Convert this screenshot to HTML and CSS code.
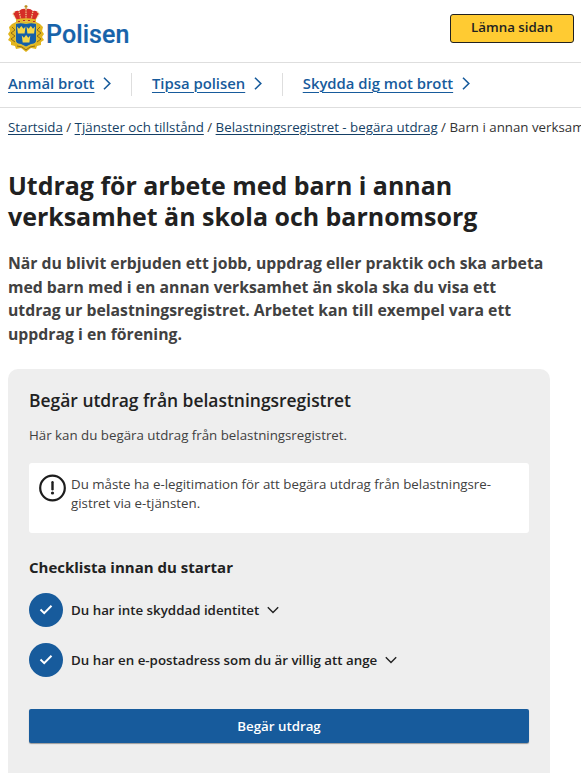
FILE: index.html
```html
<!DOCTYPE html>
<html lang="sv">
<head>
<meta charset="utf-8">
<title>Polisen</title>
<link rel="stylesheet" href="styles.css">
</head>
<body>
<header class="top">
  <a class="brand">
    <svg class="crest" width="36" height="48" viewBox="0 0 36 48">
      <path d="M8 17 L4 19 1 22 2 26 0 29 2 32 0 35 3 37 3 40 7 41 8 44 13 43 18 47 23 43 28 44 29 41 33 40 33 37 36 35 34 32 36 29 34 26 35 22 32 19 28 17Z" fill="#e2b51e"/>
      <path d="M4 22l3 3-4 3 4 3-4 3 4 3M32 22l-3 3 4 3-4 3 4 3-4 3M9 41l5 1 4 3 4-3 5-1" fill="none" stroke="#80651c" stroke-width=".9"/>
      <path d="M7.5 18.5 Q13 17 18 18.5 Q23 17 28.5 18.5 V36 Q28 39 23 39.5 L18 42 13 39.5 Q8 39 7.5 36Z" fill="#155fa8" stroke="#f1cd37" stroke-width=".8"/>
      <path d="M9 16 L5 9 Q7 5 11 6 Q14 3 18 4 Q22 3 25 6 Q29 5 31 9 L27 16Z" fill="#d52d27"/>
      <path d="M9 16 L5 9 7 6M13 15 L11 6M18 15V4M23 15 L25 6M27 16 L31 9 29 6" fill="none" stroke="#f3d994" stroke-width="1.3" stroke-dasharray="1.4 1"/>
      <path d="M8 14.5Q18 12 28 14.5V18Q18 15.5 8 18Z" fill="#e6b72a"/>
      <path d="M10 16.5h2m3-1h2m3 0h2m3 1h2" stroke="#b73028" stroke-width="1.2"/>
      <path d="M18 0v4M16.5 1.5h3" stroke="#bd8d20" stroke-width="1.3"/>
      <path d="M9 21.5l2.1 2.2 2.2-2.7 2.2 2.7 2-2.2-.9 7h-6.7ZM18.5 21.5l2.1 2.2 2.2-2.7 2.2 2.7 2-2.2-.9 7h-6.7ZM13.8 30.5l2.1 2.2 2.2-2.7 2.2 2.7 2-2.2-.9 7h-6.7Z" fill="#f7d848"/>
    </svg>
    <span class="wordmark">Polisen</span>
  </a>
  <button class="leave">Lämna sidan</button>
</header>
<nav class="nav">
  <div class="nav-item"><a>Anmäl brott</a><svg width="8" height="13" viewBox="0 0 8 13"><path d="M1 .8l5.8 5.7L1 12.2"/></svg></div>
  <div class="nav-item"><a>Tipsa polisen</a><svg width="8" height="13" viewBox="0 0 8 13"><path d="M1 .8l5.8 5.7L1 12.2"/></svg></div>
  <div class="nav-item"><a>Skydda dig mot brott</a><svg width="8" height="13" viewBox="0 0 8 13"><path d="M1 .8l5.8 5.7L1 12.2"/></svg></div>
</nav>
<div class="crumbs"><a>Startsida</a> / <a>Tjänster och tillstånd</a> / <a>Belastningsregistret - begära utdrag</a> / Barn i annan verksamhet</div>
<main>
  <h1>Utdrag för arbete med barn i annan<br>verksamhet än skola och barnomsorg</h1>
  <p class="intro">När du blivit erbjuden ett jobb, uppdrag eller praktik och ska arbeta<br>med barn med i en annan verksamhet än skola ska du visa ett<br>utdrag ur belastningsregistret. Arbetet kan till exempel vara ett<br>uppdrag i en förening.</p>
  <section class="card">
    <h2>Begär utdrag från belastningsregistret</h2>
    <p class="lead">Här kan du begära utdrag från belastningsregistret.</p>
    <div class="notice">
      <svg width="28" height="28" viewBox="0 0 28 28"><circle cx="13.5" cy="14" r="12.3" fill="none" stroke="#1d1d1d" stroke-width="2.2"/><path d="M13.5 8.2v7" stroke="#1d1d1d" stroke-width="2.4" stroke-linecap="round"/><circle cx="13.5" cy="19" r="1.6" fill="#1d1d1d"/></svg>
      <p>Du måste ha e-legitimation för att begära utdrag från belastningsre-<br>gistret via e-tjänsten.</p>
    </div>
    <h3>Checklista innan du startar</h3>
    <div class="check">
      <span class="dot"><svg width="14" height="11" viewBox="0 0 14 11"><path d="M1.5 5.5l3.7 3.7L12.5 1.7"/></svg></span>
      <span>Du har inte skyddad identitet</span>
      <svg class="chev" width="12" height="8" viewBox="0 0 12 8"><path d="M.8 1.2L6 6.4l5.2-5.2"/></svg>
    </div>
    <div class="check">
      <span class="dot"><svg width="14" height="11" viewBox="0 0 14 11"><path d="M1.5 5.5l3.7 3.7L12.5 1.7"/></svg></span>
      <span>Du har en e-postadress som du är villig att ange</span>
      <svg class="chev" width="12" height="8" viewBox="0 0 12 8"><path d="M.8 1.2L6 6.4l5.2-5.2"/></svg>
    </div>
    <button class="cta">Begär utdrag</button>
  </section>
</main>
</body>
</html>
```
FILE: styles.css
```css
* { box-sizing: border-box; }
html { overflow: hidden; }
body { margin: 0; height: 773px; overflow: hidden; background: #fff; color: #212121; font-family: "Open Sans", "Liberation Sans", sans-serif; }
h1, h2, h3, p { margin: 0; }
.top { height: 63px; border-bottom: 1px solid #dedede; display: flex; justify-content: space-between; padding: 0 7px 0 8px; }
.brand { display: flex; padding-top: 5px; }
.wordmark { font: 500 25px/30px Roboto, sans-serif; letter-spacing: .1px; color: #1763aa; -webkit-text-stroke: .2px #1763aa; margin: 15px 0 0 2px; }
.leave { width: 124px; height: 29px; margin: 14px 0 0; padding: 0 0 3px; border: 1px solid #212121; border-radius: 3px; background: #ffcb32; color: #212121; font: 600 13.3px/20px "Open Sans", sans-serif; }
.nav { height: 45px; border-bottom: 1px solid #dedede; display: flex; padding: 10px 8px 0; }
.nav-item { display: flex; align-items: center; height: 23px; gap: 9px; color: #175b9c; font-size: 14.85px; font-weight: 600; line-height: 20px; white-space: nowrap; }
.nav-item + .nav-item { border-left: 1px solid #dedede; margin-left: 20px; padding-left: 19.5px; }
.nav-item a { margin-top: -3px; text-decoration: underline; text-decoration-thickness: 1px; text-underline-offset: 3px; }
.nav-item svg { margin-top: -2px; fill: none; stroke: #175b9c; stroke-width: 1.6; }
.crumbs { height: 39px; padding: 9px 0 0 8px; font-size: 13.3px; line-height: 20px; white-space: nowrap; color: #333; }
.crumbs a { color: #153f65; text-decoration: underline; text-underline-offset: 2px; }
main { padding: 23px 31px 0 8px; }
h1 { font-size: 24.95px; line-height: 31px; font-weight: 700; white-space: nowrap; }
.intro { margin-top: 20px; font-size: 15.78px; line-height: 23.7px; font-weight: 700; color: #414141; white-space: nowrap; }
.card { height: 430px; margin-top: 22px; padding: 20px 21px; border-radius: 10px; background: #eee; }
h2 { font-size: 17.45px; line-height: 22px; font-weight: 600; }
.lead { margin-top: 14px; font-size: 13.3px; line-height: 20px; color: #414141; }
.notice { height: 70px; margin-top: 18px; padding: 11px 10px; border-radius: 3px; background: #fff; display: flex; gap: 4px; }
.notice p { margin-top: 1px; font-size: 13.3px; line-height: 19.5px; color: #414141; white-space: nowrap; }
h3 { margin: 24px 0 15px; font-size: 15px; line-height: 21px; font-weight: 700; }
.check { display: flex; align-items: center; height: 34px; margin-bottom: 16px; gap: 8px; font-size: 13.32px; font-weight: 600; }
.dot { width: 34px; height: 34px; border-radius: 50%; background: #175b9c; display: flex; align-items: center; justify-content: center; }
.dot svg { fill: none; stroke: #fff; stroke-width: 2; }
.chev { fill: none; stroke: #212121; stroke-width: 1.4; }
.cta { display: block; width: 100%; height: 34px; margin-top: 32px; padding: 0; border: 0; border-radius: 2px; background: #175b9c; box-shadow: 0 1px 1px #999; color: #fff; font: 600 13.3px/20px "Open Sans", sans-serif; }
```
